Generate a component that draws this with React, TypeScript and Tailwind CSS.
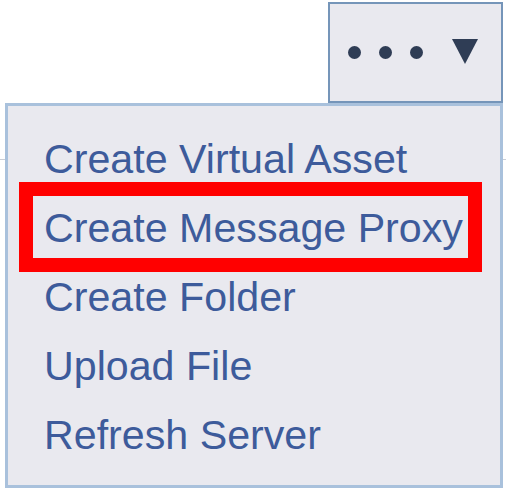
const MENU_ITEMS = [
  "Create Virtual Asset",
  "Create Message Proxy",
  "Create Folder",
  "Upload File",
  "Refresh Server"
];

function MoreButton() {
  return (
    <button
      type="button"
      className="flex h-[101px] w-[175px] items-center border-2 border-[#7595b9] bg-[#e9e9ef] pl-[18px]"
    >
      <span className="flex items-center gap-[18px]">
        <span className="h-[13px] w-[13px] rounded-full bg-[#2f3d55]" />
        <span className="h-[13px] w-[13px] rounded-full bg-[#2f3d55]" />
        <span className="h-[13px] w-[13px] rounded-full bg-[#2f3d55]" />
      </span>
      <svg className="ml-[29px] -mt-[3px]" width="26" height="25" viewBox="0 0 26 25" aria-hidden="true">
        <polygon points="0,0 26,0 13,25" fill="#2f3d55" />
      </svg>
    </button>
  );
}

export default function App() {
  return (
    <div
      className="relative h-[491px] w-[506px] overflow-hidden bg-white"
      style={{ fontFamily: '"Liberation Sans", Arial, sans-serif' }}
    >
      <div className="flex h-[160px] items-start justify-end border-b border-[#c9ced6] pr-[3px] pt-[2px]">
        <MoreButton />
      </div>

      <ul className="absolute left-[5px] top-[103px] h-[385px] w-[498px] border-[3px] border-[#a9c1dc] bg-[#e9e9ef] pl-[36px] pt-[19px]">
        {MENU_ITEMS.map((item) => (
          <li key={item} className="text-[41.2px] leading-[69px] text-[#3d5b9b] whitespace-nowrap">
            {item}
          </li>
        ))}
      </ul>

      <div className="absolute left-[19px] top-[182px] h-[90px] w-[463px] border-[14px] border-[#ff0000]" />
    </div>
  );
}
